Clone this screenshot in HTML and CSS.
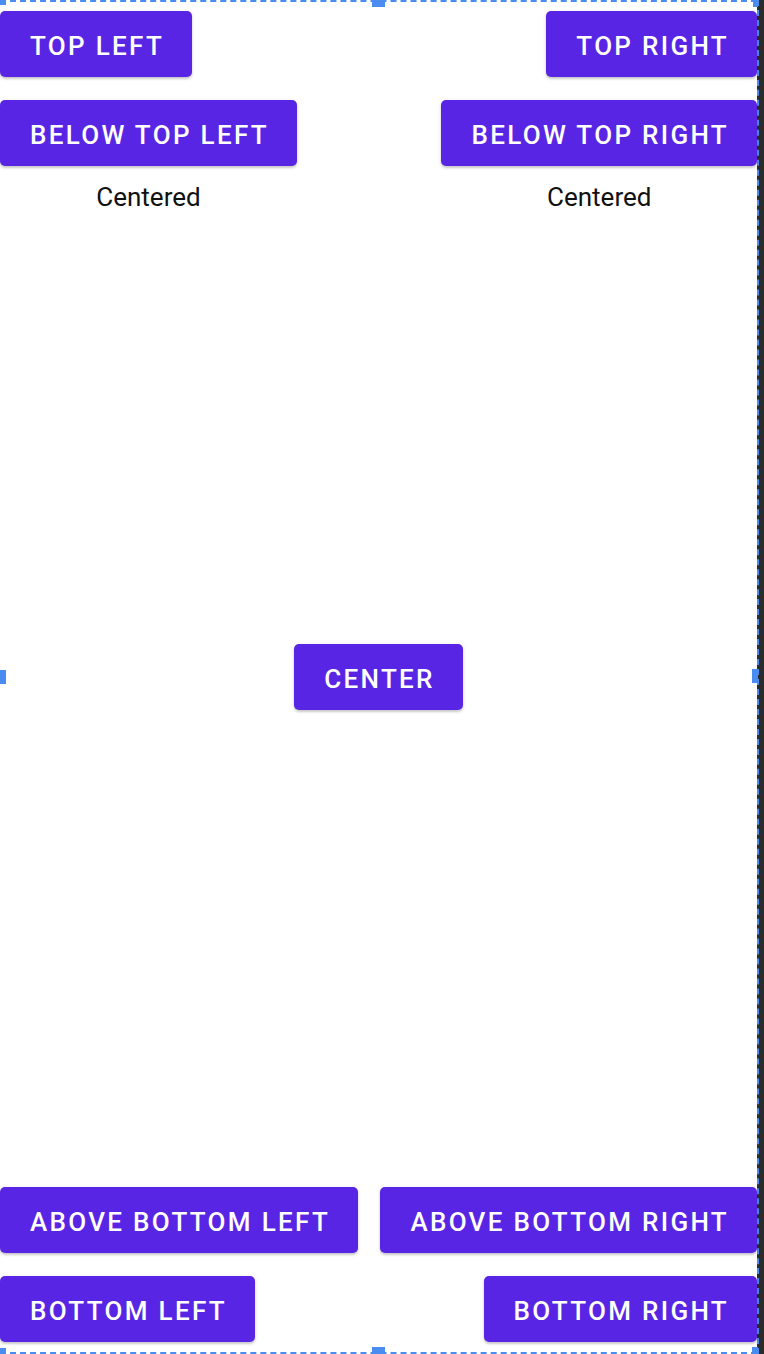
FILE: index.html
```html
<!DOCTYPE html>
<html>
<head>
<meta charset="utf-8">
<link rel="stylesheet" href="styles.css">
</head>
<body>
<div class="page">
  <div class="frame">
    <div class="canvas">
      <div class="top">
        <div class="row">
          <button class="btn">TOP LEFT</button>
          <button class="btn">TOP RIGHT</button>
        </div>
        <div class="row">
          <div class="col">
            <button class="btn">BELOW TOP LEFT</button>
            <span class="label">Centered</span>
          </div>
          <div class="col">
            <button class="btn">BELOW TOP RIGHT</button>
            <span class="label">Centered</span>
          </div>
        </div>
      </div>
      <div class="center">
        <button class="btn">CENTER</button>
      </div>
      <div class="bottom">
        <div class="row">
          <button class="btn">ABOVE BOTTOM LEFT</button>
          <button class="btn">ABOVE BOTTOM RIGHT</button>
        </div>
        <div class="row">
          <button class="btn">BOTTOM LEFT</button>
          <button class="btn">BOTTOM RIGHT</button>
        </div>
      </div>
    </div>
    <span class="handle h-tl"></span>
    <span class="handle h-tc"></span>
    <span class="handle h-tr"></span>
    <span class="handle h-ml"></span>
    <span class="handle h-mr"></span>
    <span class="handle h-bl"></span>
    <span class="handle h-bc"></span>
    <span class="handle h-br"></span>
  </div>
  <div class="strip"></div>
</div>
</body>
</html>
```

FILE: styles.css
```css
html, body {
  margin: 0;
  padding: 0;
  background: #ffffff;
}

.page {
  display: flex;
  width: 764px;
  height: 1354px;
  overflow: hidden;
}

.frame {
  position: relative;
  width: 757px;
  height: 1354px;
  box-sizing: border-box;
  border-top: 2px dashed #4a8cf0;
  border-bottom: 2px dashed #4a8cf0;
  background: #ffffff;
}

.strip {
  flex: 1;
  background: #2b2b2b;
  border-left: 2px dashed #4a8cf0;
}

.canvas {
  display: grid;
  height: 100%;
}

.top, .center, .bottom {
  grid-area: 1 / 1;
}

.top {
  align-self: start;
  padding-top: 9px;
  display: flex;
  flex-direction: column;
  gap: 23px;
}

.center {
  align-self: center;
  justify-self: center;
}

.bottom {
  align-self: end;
  padding-bottom: 10px;
  display: flex;
  flex-direction: column;
  gap: 23px;
}

.row {
  display: flex;
  justify-content: space-between;
  align-items: flex-start;
}

.col {
  display: flex;
  flex-direction: column;
  align-items: center;
}

.btn {
  box-sizing: border-box;
  height: 66px;
  padding: 4px 28px 0 30px;
  margin: 0;
  border: none;
  border-radius: 5px;
  background: #5925e4;
  color: #ffffff;
  font-family: Roboto, "Liberation Sans", sans-serif;
  font-weight: 500;
  font-size: 26px;
  letter-spacing: 0.089em;
  white-space: nowrap;
  box-shadow: 0 2px 2px rgba(0, 0, 0, 0.14), 0 1px 4px rgba(0, 0, 0, 0.12);
  cursor: pointer;
}

.label {
  margin-top: 16px;
  font-family: Roboto, "Liberation Sans", sans-serif;
  font-size: 26px;
  color: #111111;
}

.handle {
  position: absolute;
  background: #4a8cf0;
}

.h-tl { left: 0; top: -2px; width: 6px; height: 5px; }
.h-tc { left: 372px; top: -2px; width: 13px; height: 7px; }
.h-tr { left: 753px; top: -2px; width: 5px; height: 7px; }
.h-ml { left: 0; top: 668px; width: 6px; height: 14px; }
.h-mr { left: 752px; top: 667px; width: 6px; height: 14px; }
.h-bl { left: 0; bottom: -2px; width: 6px; height: 6px; }
.h-bc { left: 372px; bottom: -2px; width: 13px; height: 7px; }
.h-br { left: 752px; bottom: -2px; width: 6px; height: 7px; }
```
